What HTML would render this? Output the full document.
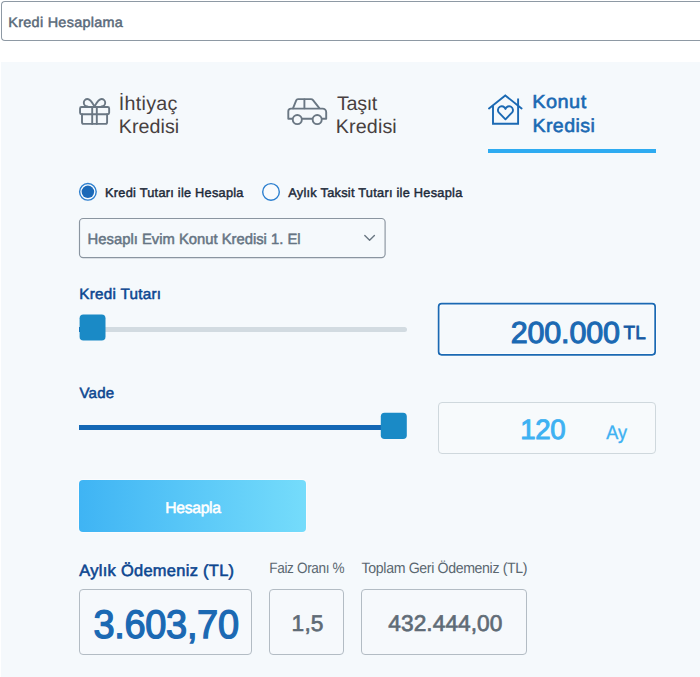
<!DOCTYPE html>
<html lang="tr">
<head>
<meta charset="utf-8">
<title>Kredi Hesaplama</title>
<style>
*{box-sizing:border-box}
html,body{margin:0;padding:0;overflow:hidden}
body{width:700px;height:677px;overflow:hidden;position:relative;background:#fff;font-family:"Liberation Sans",sans-serif}
.t{position:absolute;white-space:nowrap;line-height:1;font-family:"Liberation Sans",sans-serif;font-weight:400;text-rendering:geometricPrecision;transform-origin:0 0}
.abs{position:absolute}
.search{left:1px;top:1px;width:699px;height:40px;border:1px solid #8e99a4;border-right:0;border-radius:4px 0 0 4px;background:#fff}
.panel{left:1px;top:62px;width:699px;height:615px;background:#f5f9fc}
.ico{position:absolute;overflow:visible}
.uline{left:488px;top:149.4px;width:168px;height:3.7px;background:#2eabf1}
.track{height:5px;border-radius:2.5px}
.box{border-radius:4px}
.btn{left:79px;top:480px;width:227px;height:52px;border-radius:4px;background:linear-gradient(90deg,#3fb4f4 0%,#75dcfb 100%);box-shadow:0 0 0 1px rgba(255,255,255,.55)}
</style>
</head>
<body>
<header>
<div class="abs search"></div>
<span class="t" id="title" style="left:8px;top:15px;font-size:14.0px;color:#596979;letter-spacing:0.28px;-webkit-text-stroke:0.48px #596979;transform:translateX(0.31px) scaleX(1.029);">Kredi Hesaplama</span>
</header>
<main>
<div class="abs panel"></div>

<nav>
<svg class="ico" style="left:78px;top:96px" width="34" height="32" viewBox="78 96 34 32" fill="none" stroke="#6a7783" stroke-width="1.9" stroke-linejoin="round" stroke-linecap="round">
  <rect x="80.05" y="107" width="29.1" height="7.3" rx="1.5"/>
  <path d="M82 114.3v8a1.6 1.6 0 0 0 1.6 1.6h21.9a1.6 1.6 0 0 0 1.6-1.6v-8"/>
  <path d="M92.2 107v16.9M96.8 107v16.9"/>
  <path d="M94.5 106.6c-1.9-3.4-3.9-7.6-7-7.6a3.7 3.7 0 0 0 0 7.4M94.5 106.6c1.9-3.4 3.9-7.6 7-7.6a3.7 3.7 0 0 1 0 7.4"/>
</svg>
<span class="t" id="t1a" style="left:118.63px;top:95px;font-size:19.7px;color:#474040;letter-spacing:0.32px;">İhtiyaç</span><span class="t" id="t1b" style="left:118.84px;top:118px;font-size:19.7px;color:#474040;letter-spacing:0.03px;">Kredisi</span>

<svg class="ico" style="left:286px;top:96px" width="44" height="32" viewBox="286 96 44 32" fill="none" stroke="#6a7783" stroke-width="1.9" stroke-linejoin="round" stroke-linecap="round">
  <path d="M292 118.7h-3.7v-7.4a2.7 2.7 0 0 1 2.7-2.7h31.6a3.6 3.6 0 0 1 3.6 3.6v6.5h-3.4"/>
  <path d="M302.8 118.7h8.9"/>
  <path d="M293 108.3l3.2-8a2 2 0 0 1 1.8-1.2h13a2.6 2.6 0 0 1 2 1l6.3 8"/>
  <path d="M304.4 99.5v8.8"/>
  <circle cx="297.3" cy="119.6" r="4.55"/>
  <circle cx="317.2" cy="119.6" r="4.55"/>
</svg>
<span class="t" id="t2a" style="left:337.04px;top:95px;font-size:19.7px;color:#474040;letter-spacing:-0.32px;">Taşıt</span><span class="t" id="t2b" style="left:335.84px;top:118px;font-size:19.7px;color:#474040;letter-spacing:0.12px;">Kredisi</span>

<svg class="ico" style="left:486px;top:92px" width="40" height="36" viewBox="486 92 40 36" fill="none" stroke="#1b69b3" stroke-width="1.9" stroke-linejoin="miter" stroke-linecap="round">
  <path d="M489 108.4L505.3 95.5L521.6 108.4"/>
  <path d="M493 106v17.8h25.1V98.6" stroke-linecap="butt"/>
  <path d="M505.45 119.3L498.95 112.7A3.85 3.85 0 1 1 505.45 108.9A3.85 3.85 0 1 1 511.95 112.7Z" stroke-linejoin="round"/>
</svg>
<span class="t" id="t3a" style="left:532px;top:94px;font-size:18.9px;color:#1b69b3;letter-spacing:0.37px;-webkit-text-stroke:0.57px #1b69b3;transform:translateX(0.34px) scaleX(1.059);">Konut</span><span class="t" id="t3b" style="left:532px;top:118px;font-size:18.9px;color:#1b69b3;letter-spacing:0.43px;-webkit-text-stroke:0.57px #1b69b3;transform:translateX(0.41px) scaleX(1.036);">Kredisi</span>
<div class="abs uline"></div>
</nav>
<form>
<svg class="ico" style="left:78px;top:182px" width="20" height="20" viewBox="78 182 20 20"><circle cx="87.9" cy="191.8" r="8.3" fill="#f9fbfd" stroke="#2c7fcf" stroke-width="1.4"/><circle cx="87.9" cy="191.8" r="6.25" fill="#1b69b8"/></svg>
<span class="t" id="r1" style="left:105px;top:187px;font-size:12.7px;color:#1c2939;letter-spacing:0.24px;-webkit-text-stroke:0.43px #1c2939;transform:translateX(0.09px) scaleX(1.007);">Kredi Tutarı ile Hesapla</span>
<svg class="ico" style="left:261px;top:182px" width="20" height="20" viewBox="261 182 20 20"><circle cx="271" cy="191.9" r="8.3" fill="#f9fbfd" stroke="#2c7fcf" stroke-width="1.4"/></svg>
<span class="t" id="r2" style="left:288px;top:187px;font-size:12.7px;color:#1c2939;letter-spacing:0.24px;-webkit-text-stroke:0.43px #1c2939;transform:translateX(0.25px) scaleX(1.009);">Aylık Taksit Tutarı ile Hesapla</span>

<svg class="ico" style="left:78px;top:217px" width="309" height="42" viewBox="78 217 309 42"><rect x="79.5" y="218.5" width="305.6" height="39.1" rx="3.6" fill="#f5f9fc" stroke="#8a95a0" stroke-width="1.15"/></svg>
<span class="t" id="sel" style="left:87.62px;top:233px;font-size:14.8px;color:#657483;-webkit-text-stroke:0.5px #657483;">Hesaplı Evim Konut Kredisi 1. El</span>
<svg class="ico" style="left:362px;top:232px" width="16" height="12" viewBox="362 232 16 12" fill="none" stroke="#6a7783" stroke-width="1.4" stroke-linecap="round" stroke-linejoin="round"><path d="M364.8 235.6L369.6 240.3L374.4 235.6"/></svg>

<span class="t" id="l1" style="left:79px;top:287px;font-size:15.0px;color:#0c4690;letter-spacing:0.27px;-webkit-text-stroke:0.51px #0c4690;transform:translateX(0.2px) scaleX(1.016);">Kredi Tutarı</span>
<div class="abs track" style="left:79px;top:327px;width:328px;background:#d2dbe1"></div>
<svg class="ico" style="left:78px;top:313px" width="30" height="30" viewBox="78 313 30 30"><rect x="79" y="327" width="4" height="5" fill="#1468b5"/><rect x="79.6" y="314.4" width="25.9" height="26.2" rx="3.8" fill="#1a8ac6"/></svg>
<svg class="ico" style="left:436px;top:301px" width="222" height="57" viewBox="436 301 222 57"><rect x="438.6" y="303.7" width="216.55" height="51.1" rx="3" fill="#f5f9fc" stroke="#ffffff" stroke-opacity=".6" stroke-width="3.6"/><rect x="438.6" y="303.7" width="216.55" height="51.1" rx="3" fill="none" stroke="#1b69b3" stroke-width="1.7"/></svg>
<span class="t" id="amt" style="left:510.67px;top:318px;font-size:30.5px;color:#1b69b3;letter-spacing:-0.15px;-webkit-text-stroke:1.1px #1b69b3;">200.000</span><span class="t" id="tl" style="left:623.5px;top:324px;font-size:19.0px;color:#155aa4;letter-spacing:0.04px;-webkit-text-stroke:0.76px #155aa4;">TL</span>

<span class="t" id="l2" style="left:79px;top:386px;font-size:15.0px;color:#0c4690;letter-spacing:0.18px;-webkit-text-stroke:0.51px #0c4690;transform:translateX(0.46px) scaleX(1.005);">Vade</span>
<div class="abs track" style="left:79px;top:425px;width:320px;background:#1468b5;border-radius:0"></div>
<svg class="ico" style="left:379px;top:411px" width="30" height="30" viewBox="379 411 30 30"><rect x="380.8" y="412.8" width="26" height="26.2" rx="3.8" fill="#1a8ac6"/></svg>
<div class="abs box" style="left:438px;top:402px;width:218px;height:52px;border:1px solid #cfd8dd;background:#f7fafc"></div>
<span class="t" id="vade" style="left:520px;top:416px;font-size:28.1px;color:#3eb1f2;letter-spacing:-0.43px;-webkit-text-stroke:0.96px #3eb1f2;transform:translateX(0.32px) scaleX(0.985);">120</span><span class="t" id="ay" style="left:606px;top:424px;font-size:19.5px;color:#3eb1f2;letter-spacing:-0.1px;-webkit-text-stroke:0.39px #3eb1f2;transform:translateX(0.25px) scaleX(0.926);">Ay</span>

<div class="abs btn"></div>
<span class="t" id="btn" style="left:165.32px;top:501px;font-size:15.7px;color:#ffffff;letter-spacing:-0.31px;-webkit-text-stroke:0.53px #ffffff;">Hesapla</span>

</form>
<section>
<span class="t" id="m1" style="left:79px;top:563px;font-size:16.3px;color:#0c4690;letter-spacing:0.3px;-webkit-text-stroke:0.55px #0c4690;transform:translateX(0.21px) scaleX(1.009);">Aylık Ödemeniz (TL)</span><span class="t" id="m2" style="left:269px;top:561px;font-size:15.0px;color:#5a6770;letter-spacing:-0.37px;transform:translateX(0.29px) scaleX(0.903);">Faiz Oranı %</span><span class="t" id="m3" style="left:361px;top:561px;font-size:15.0px;color:#5a6770;letter-spacing:-0.38px;transform:translateX(0.62px) scaleX(0.943);">Toplam Geri Ödemeniz (TL)</span>
<div class="abs box" style="left:79px;top:589px;width:173px;height:66px;border:1px solid #b3bcc4;background:#f6f9fc"></div>
<div class="abs box" style="left:269px;top:589px;width:75px;height:66px;border:1px solid #b3bcc4;background:#f6f9fc"></div>
<div class="abs box" style="left:361px;top:589px;width:166px;height:66px;border:1px solid #b3bcc4;background:#f6f9fc"></div>
<span class="t" id="v1" style="left:93px;top:606px;font-size:39.8px;color:#1b69b3;letter-spacing:-0.35px;-webkit-text-stroke:1.35px #1b69b3;transform:translateX(0.44px) scaleX(0.955);">3.603,70</span><span class="t" id="v2" style="left:291.59px;top:612px;font-size:22.7px;color:#5f6b76;letter-spacing:0.18px;-webkit-text-stroke:0.68px #5f6b76;">1,5</span><span class="t" id="v3" style="left:388.37px;top:612px;font-size:22.7px;color:#5f6b76;letter-spacing:0.05px;-webkit-text-stroke:0.68px #5f6b76;">432.444,00</span>
</section>
</main>
</body>
</html>
